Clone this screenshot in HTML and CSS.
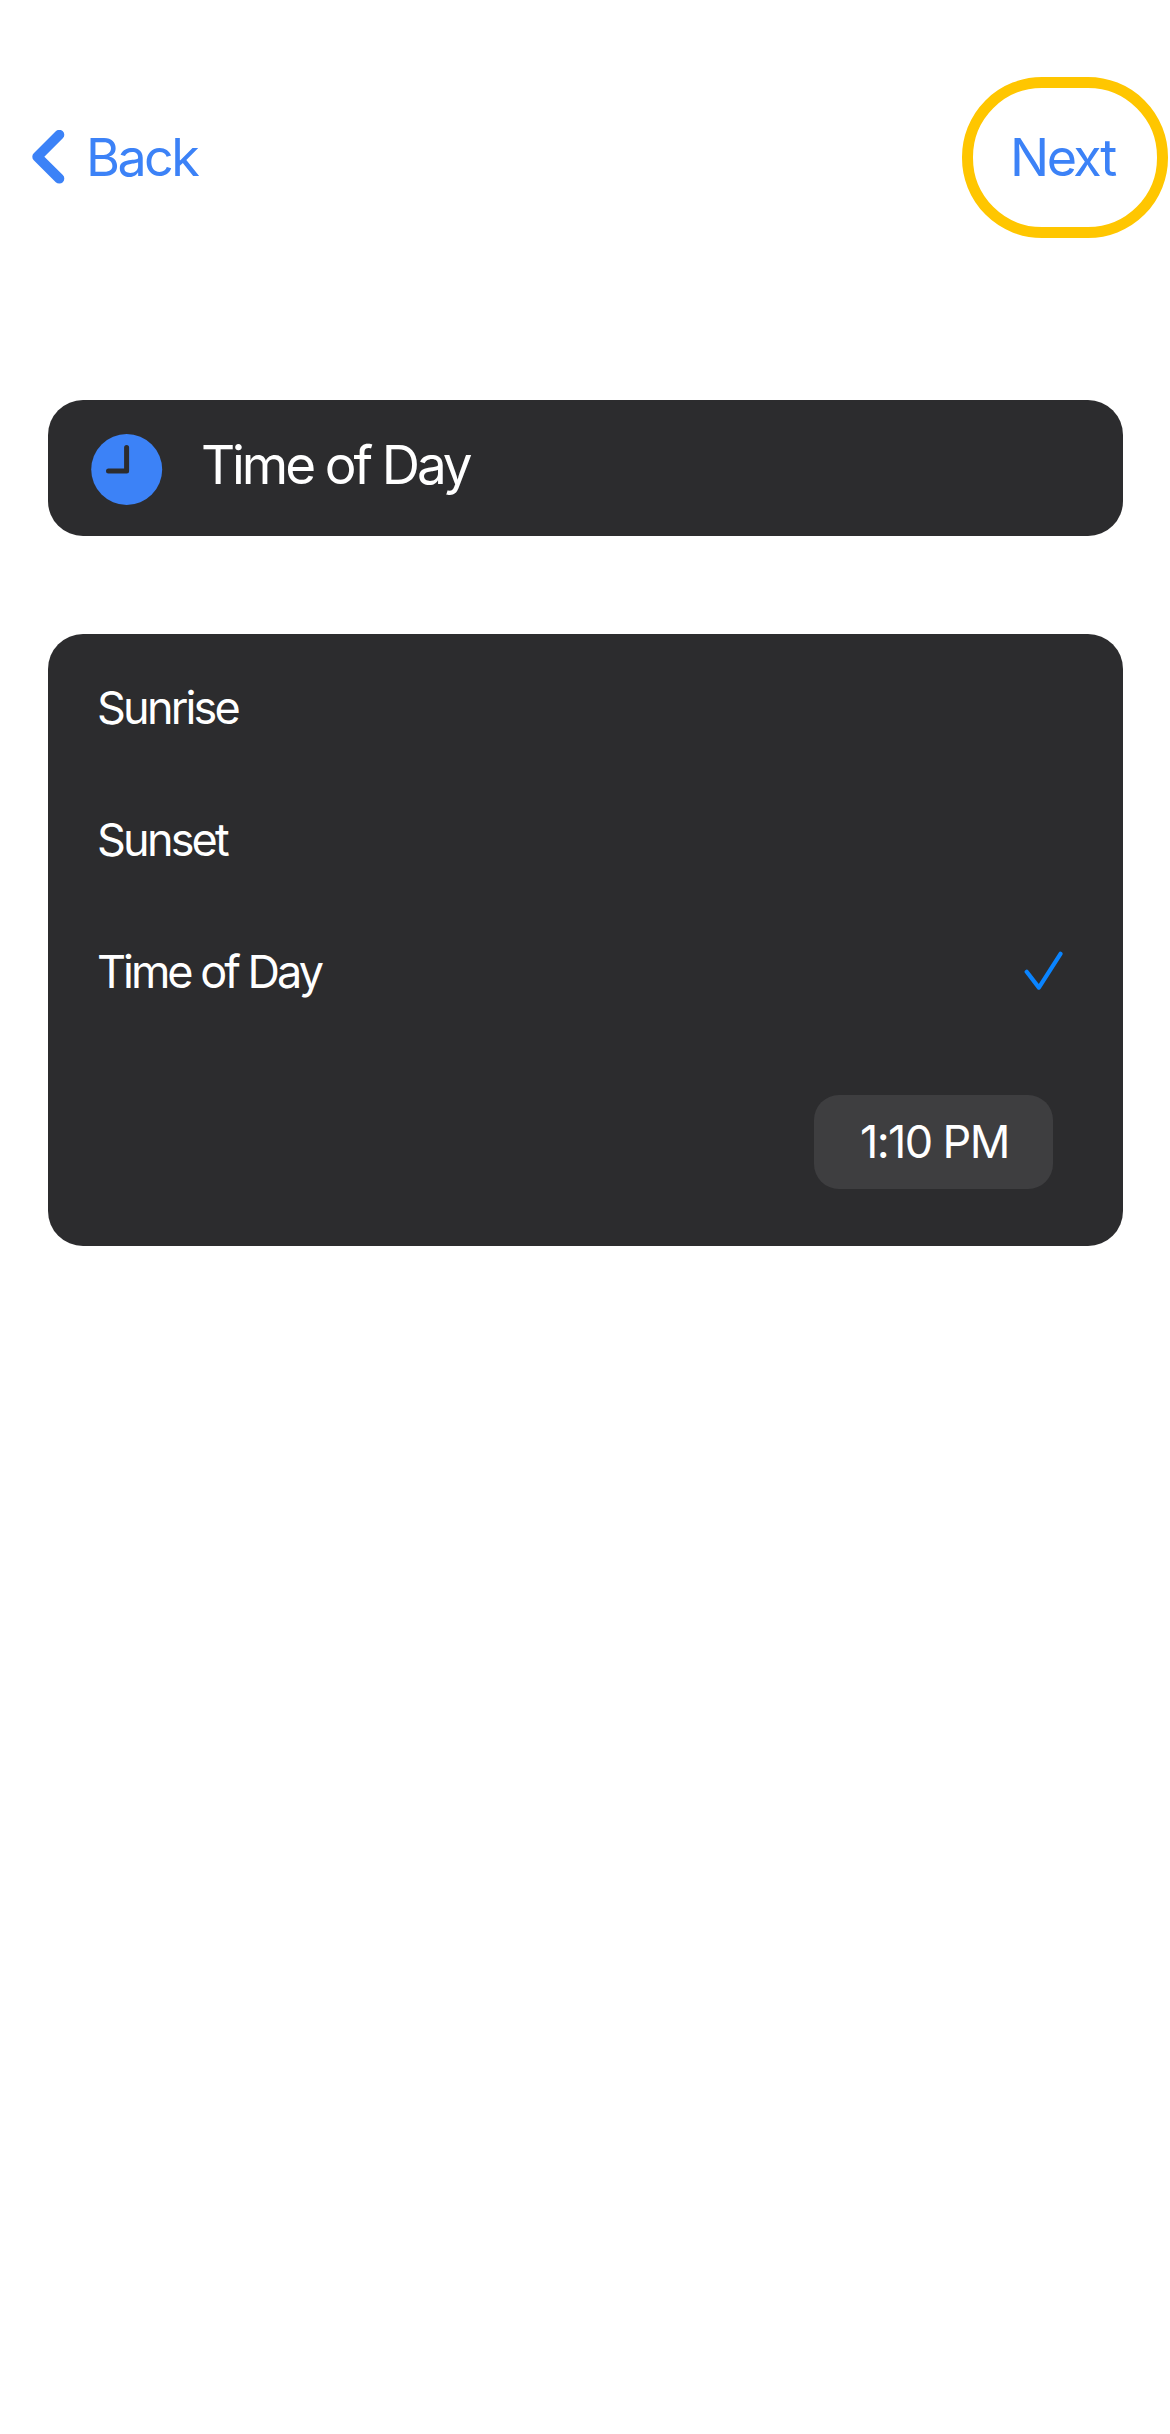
FILE: index.html
```
<!DOCTYPE html>
<html lang="en">
<head>
<meta charset="utf-8">
<meta name="viewport" content="width=device-width">
<title>Time of Day</title>
<link rel="stylesheet" href="styles.css">
</head>
<body>
<header class="nav">
  <a class="nav-back">
    <svg class="chevron" width="33" height="55" viewBox="0 0 33 55" fill="none" stroke="currentColor" stroke-width="10" stroke-linecap="round" stroke-linejoin="round"><path d="M27.3 4.8 5.3 26.7 27.3 48.6"/></svg>
    <span class="nav-label back-label">Back</span>
  </a>
  <a class="nav-next"><span class="nav-label next-label">Next</span></a>
</header>
<main class="content">
  <section class="card summary">
    <svg class="clock" width="72" height="72" viewBox="0 0 72 72" fill="none"><circle cx="35.7" cy="35.5" r="35.5" fill="#3c82f7"/><path d="M35.6 13.6v23.3H17.5" stroke="#2c2c2e" stroke-width="5" stroke-linecap="round" stroke-linejoin="round"/></svg>
    <h1 class="title">Time of Day</h1>
  </section>
  <section class="card options">
    <div class="row"><span>Sunrise</span></div>
    <div class="row"><span>Sunset</span></div>
    <div class="row">
      <span class="time-of-day">Time of Day</span>
      <svg class="check" width="40" height="40" viewBox="0 0 40 40" fill="none" stroke="#0a84ff" stroke-width="4.2" stroke-linecap="round" stroke-linejoin="round"><path d="M2.7 20.8 14.9 36.6 36.5 2.8"/></svg>
    </div>
    <div class="picker"><span class="time-value">1:10 PM</span></div>
  </section>
</main>
</body>
</html>
```
FILE: styles.css
```
* { box-sizing: border-box; }
body {
  margin: 0;
  min-height: 2434px;
  background: #fff;
  font-family: Inter, "Liberation Sans", sans-serif;
  font-size: 45px;
  color: #fff;
}
.nav {
  display: flex;
  justify-content: space-between;
  align-items: center;
  height: 161px;
  margin-top: 77px;
  padding: 0 2px 0 32px;
  color: #3c82f7;
}
.nav-back { display: flex; align-items: center; gap: 21px; }
.nav-label { font-size: 52px; line-height: 64px; white-space: nowrap; }
.back-label { letter-spacing: -2.6px; }
.next-label { letter-spacing: -2.5px; }
.nav-next {
  display: flex;
  align-items: center;
  width: 206px;
  height: 161px;
  padding-left: 37px;
  border: 11px solid #ffc600;
  border-radius: 80px;
}
.content {
  display: flex;
  flex-direction: column;
  gap: 98px;
  padding: 162px 47px 0 48px;
}
.card { background: #2c2c2e; border-radius: 35px; }
.summary {
  display: flex;
  align-items: center;
  gap: 38px;
  height: 136px;
  padding: 0 43px;
}
.clock { margin-top: 3px; }
.title { margin: 0 0 6px; font-size: 53px; line-height: 64px; font-weight: 400; letter-spacing: -3.1px; }
.options { height: 612px; padding: 7px 59px 0 49px; }
.row {
  display: flex;
  justify-content: space-between;
  align-items: center;
  height: 132px;
  letter-spacing: -2.8px;
}
.time-of-day { letter-spacing: -3px; }
.picker { display: flex; justify-content: flex-end; padding: 58px 11px 0 0; }
.time-value {
  display: flex;
  align-items: center;
  width: 239px;
  height: 94px;
  padding: 0 0 2px 46px;
  border-radius: 25px;
  background: #3e3e40;
  letter-spacing: -1.6px;
}
```
